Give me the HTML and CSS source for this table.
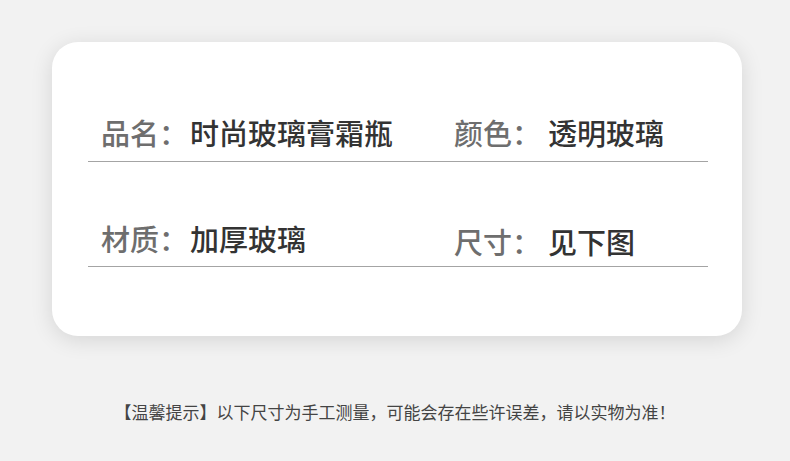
FILE: index.html
```html
<!DOCTYPE html>
<html lang="zh-CN">
<head>
  <meta charset="UTF-8" />
  <title>产品信息</title>
  <link rel="stylesheet" href="styles.css">
</head>
<body>
  <div class="card">
    <div class="row">
      <div class="cell"><span class="label">品名：</span><span class="value">时尚玻璃膏霜瓶</span></div>
      <div class="cell"><span class="label">颜色：</span><span class="value">透明玻璃</span></div>
    </div>
    <div class="row second">
      <div class="cell"><span class="label">材质：</span><span class="value">加厚玻璃</span></div>
      <div class="cell low"><span class="label">尺寸：</span><span class="value">见下图</span></div>
    </div>
  </div>
  <p class="tip">【温馨提示】以下尺寸为手工测量，可能会存在些许误差，请以实物为准！</p>
</body>
</html>
```

FILE: styles.css
```css
* { margin: 0; padding: 0; box-sizing: border-box; }
body {
  background: #f2f2f2;
  font-family: "Noto Sans CJK SC", "Noto Sans", sans-serif;
  width: 790px;
  height: 461px;
  overflow: hidden;
  padding-top: 42px;
}
.card {
  margin-left: 52px;
  width: 690px;
  height: 294px;
  background: #fff;
  border-radius: 26px;
  box-shadow: 0 4px 22px rgba(0, 0, 0, 0.12);
  padding: 70px 34px 0 36px;
}
.row {
  display: flex;
  border-bottom: 1px solid #a4a4a4;
  padding-bottom: 9px;
}
.row.second {
  margin-top: 56px;
  padding-bottom: 8px;
}
.cell {
  display: flex;
  align-items: center;
  height: 40px;
  font-size: 29px;
  line-height: 40px;
}
.cell:first-child {
  width: 366px;
  padding-left: 13px;
}
.cell.low { padding-top: 6px; }
.label {
  color: #6e6e6e;
  font-weight: 500;
  margin-right: 2px;
}
.cell:last-child .label { margin-right: 7px; }
.value {
  color: #333;
  font-weight: 500;
}
.tip {
  margin-top: 64px;
  text-align: center;
  font-size: 17px;
  line-height: 24px;
  color: #444;
}
```
